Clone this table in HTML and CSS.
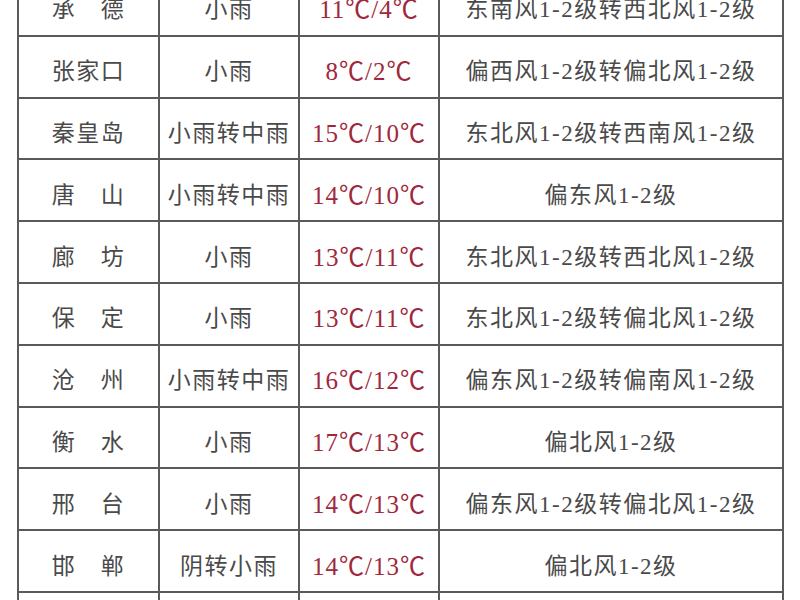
FILE: index.html
```html
<!DOCTYPE html>
<html lang="zh-CN">
<head>
<meta charset="utf-8">
<title>天气预报</title>
<link rel="stylesheet" href="styles.css">
</head>
<body>
<div class="wrap">
<table class="weather">
<colgroup><col class="c1"><col class="c2"><col class="c3"><col class="c4"></colgroup>
<tbody>
<tr><td class="city">承　德</td><td>小雨</td><td class="temp">11℃/4℃</td><td>东南风1-2级转西北风1-2级</td></tr>
<tr><td class="city">张家口</td><td>小雨</td><td class="temp">8℃/2℃</td><td>偏西风1-2级转偏北风1-2级</td></tr>
<tr><td class="city">秦皇岛</td><td>小雨转中雨</td><td class="temp">15℃/10℃</td><td>东北风1-2级转西南风1-2级</td></tr>
<tr><td class="city">唐　山</td><td>小雨转中雨</td><td class="temp">14℃/10℃</td><td>偏东风1-2级</td></tr>
<tr><td class="city">廊　坊</td><td>小雨</td><td class="temp">13℃/11℃</td><td>东北风1-2级转西北风1-2级</td></tr>
<tr><td class="city">保　定</td><td>小雨</td><td class="temp">13℃/11℃</td><td>东北风1-2级转偏北风1-2级</td></tr>
<tr><td class="city">沧　州</td><td>小雨转中雨</td><td class="temp">16℃/12℃</td><td>偏东风1-2级转偏南风1-2级</td></tr>
<tr><td class="city">衡　水</td><td>小雨</td><td class="temp">17℃/13℃</td><td>偏北风1-2级</td></tr>
<tr><td class="city">邢　台</td><td>小雨</td><td class="temp">14℃/13℃</td><td>偏东风1-2级转偏北风1-2级</td></tr>
<tr><td class="city">邯　郸</td><td>阴转小雨</td><td class="temp">14℃/13℃</td><td>偏北风1-2级</td></tr>
<tr><td class="city"></td><td></td><td class="temp"></td><td></td></tr>
</tbody>
</table>
</div>
</body>
</html>
```
FILE: styles.css
```css
html, body {
  margin: 0;
  padding: 0;
  background: #ffffff;
  overflow: hidden;
}
.wrap {
  padding-left: 17px;
  margin-top: -27px;
}
.weather {
  border-collapse: collapse;
  table-layout: fixed;
  width: 767px;
}
.c1 { width: 141px; }
.c2 { width: 140px; }
.c3 { width: 140px; }
.c4 { width: 344px; }
.weather td {
  border: 2px solid #5a5a5a;
  height: 61.8px;
  padding: 5px 0 0 0;
  box-sizing: border-box;
  text-align: center;
  vertical-align: middle;
  font-family: "Liberation Serif", "Noto Sans CJK SC", serif;
  font-size: 23px;
  letter-spacing: 1.5px;
  color: #4a4a4a;
  white-space: nowrap;
}
.weather td.temp {
  color: #a0283c;
  font-size: 25px;
  letter-spacing: 1px;
}
```
